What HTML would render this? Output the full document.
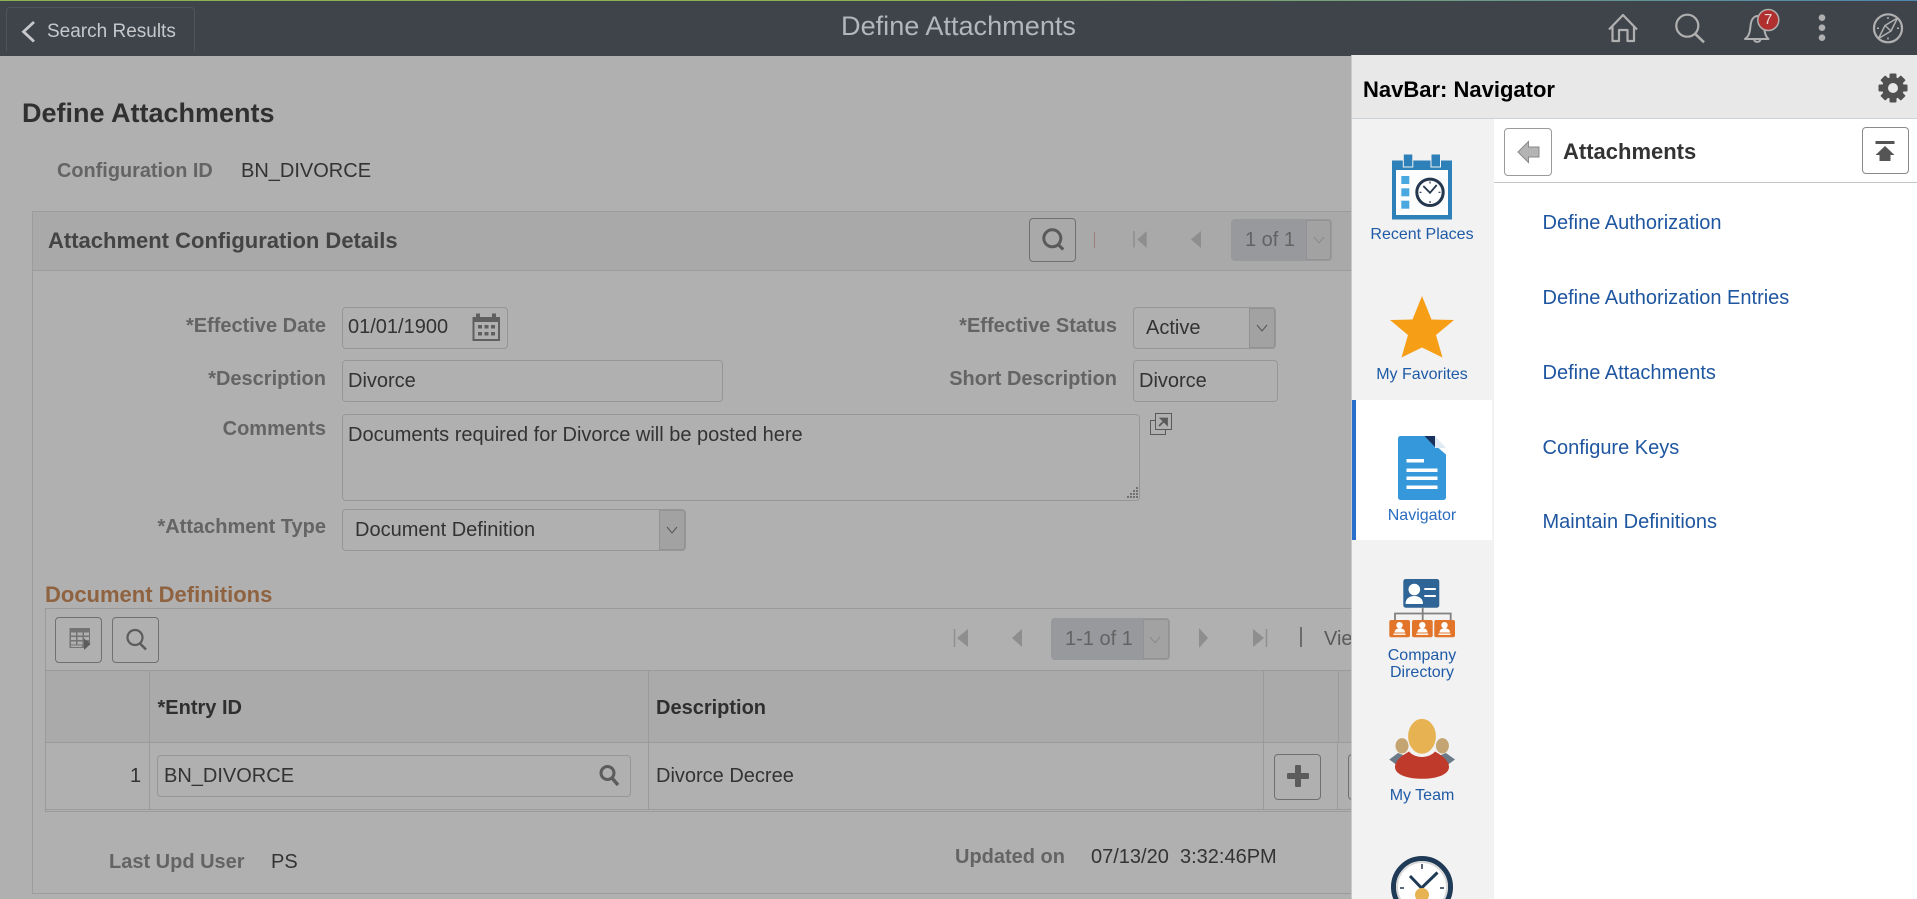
<!DOCTYPE html>
<html lang="en"><head><meta charset="utf-8"><title>Define Attachments</title>
<style>
html,body{margin:0;padding:0;width:1917px;height:899px;overflow:hidden;background:#b0b0b0;font-family:"Liberation Sans",Arial,sans-serif}
#root{position:relative;width:1917px;height:899px;overflow:hidden}
.a{position:absolute;box-sizing:border-box}
.t{position:absolute;line-height:24px;height:24px;white-space:nowrap;font-size:20px;color:#333}
.b{font-weight:bold}
.l{font-weight:bold;color:#646464;text-align:right}
.in{position:absolute;box-sizing:border-box;border:1px solid #969699;border-radius:4px}
.btn{position:absolute;box-sizing:border-box;border:1px solid #707070;border-radius:4px}
.dd{position:absolute;box-sizing:border-box;background:#97999c;border-radius:4px}
.ln{position:absolute;background:#9a9a9d}
.nl{position:absolute;left:1352px;width:140px;text-align:center;font-size:16px;line-height:18px;color:#1f5aa6}
.lk{position:absolute;left:1542.5px;font-size:20px;line-height:24px;color:#1f56a0;white-space:nowrap}
svg{position:absolute;left:0;top:0}
</style></head><body><div id="root">

<!-- header -->
<div class="a" style="left:0;top:0;width:1917px;height:56px;background:#3f444b"></div>
<div class="a" style="left:0;top:0;width:1917px;height:1px;background:linear-gradient(90deg,#8db255 0%,#8db255 50%,#4f86b0 100%)"></div>
<div class="a" style="left:6px;top:7px;width:189px;height:44px;border:1px solid #50555c;border-bottom:0;border-radius:4px 4px 0 0"></div>
<div class="t" style="left:47px;top:20px;font-size:19px;color:#c6c8cb">Search Results</div>
<div class="t" style="left:640px;width:637px;top:14px;text-align:center;font-size:27.1px;line-height:24px;color:#b3b6ba">Define Attachments</div>

<!-- page -->
<div class="t b" style="left:22px;top:101px;font-size:27px;color:#303030">Define Attachments</div>
<div class="t l" style="left:57px;top:159px;font-size:19.9px">Configuration ID</div>
<div class="t" style="left:241px;top:159px;font-size:20px">BN_DIVORCE</div>

<div class="a" style="left:32px;top:211px;width:1330px;height:683px;border:1px solid #9c9c9c"></div>
<div class="a" style="left:33px;top:212px;width:1320px;height:59px;background:#a9a9a9;border-bottom:1px solid #9c9c9c"></div>
<div class="t b" style="left:48px;top:229px;font-size:22px;color:#444">Attachment Configuration Details</div>

<div class="btn" style="left:1029px;top:218px;width:47px;height:44px"></div>
<div class="a" style="left:1093.5px;top:231.500px;width:1.500px;height:16px;background:#9c7f7a"></div>
<div class="dd" style="left:1231px;top:219px;width:101px;height:42px"></div>
<div class="a" style="left:1306px;top:220px;width:25px;height:40px;background:#a2a2a2;border:1px solid #929292;border-radius:0 3px 3px 0"></div>
<div class="t" style="left:1245px;top:228px;color:#636363">1 of 1</div>

<!-- form -->
<div class="t l" style="left:100px;width:226px;top:314px">*Effective Date</div>
<div class="t l" style="left:100px;width:226px;top:367px">*Description</div>
<div class="t l" style="left:100px;width:226px;top:417px">Comments</div>
<div class="t l" style="left:100px;width:226px;top:515px">*Attachment Type</div>

<div class="in" style="left:342px;top:307px;width:166px;height:42px"></div>
<div class="t" style="left:348px;top:315px">01/01/1900</div>
<div class="in" style="left:342px;top:360px;width:381px;height:42px"></div>
<div class="t" style="left:348px;top:369px">Divorce</div>
<div class="in" style="left:342px;top:414px;width:798px;height:87px"></div>
<div class="t" style="left:348px;top:423px">Documents required for Divorce will be posted here</div>
<div class="in" style="left:342px;top:509px;width:344px;height:42px"></div>
<div class="a" style="left:659px;top:510px;width:26px;height:40px;background:#a2a2a2;border:1px solid #929292;border-radius:0 3px 3px 0"></div>
<div class="t" style="left:355px;top:518px">Document Definition</div>

<div class="t l" style="left:900px;width:217px;top:314px">*Effective Status</div>
<div class="t l" style="left:900px;width:217px;top:367px">Short Description</div>
<div class="in" style="left:1133px;top:307px;width:143px;height:42px"></div>
<div class="a" style="left:1249px;top:308px;width:26px;height:40px;background:#a2a2a2;border:1px solid #929292;border-radius:0 3px 3px 0"></div>
<div class="t" style="left:1146px;top:316px">Active</div>
<div class="in" style="left:1133px;top:360px;width:145px;height:42px"></div>
<div class="t" style="left:1139px;top:369px">Divorce</div>

<!-- grid -->
<div class="t b" style="left:45px;top:583px;font-size:22px;color:#8f6240">Document Definitions</div>
<div class="ln" style="left:45px;top:608px;width:1320px;height:1px"></div>
<div class="ln" style="left:45px;top:608px;width:1px;height:204px"></div>
<div class="btn" style="left:55px;top:617px;width:47px;height:46px"></div>
<div class="btn" style="left:112px;top:617px;width:47px;height:46px"></div>
<div class="ln" style="left:45px;top:670px;width:1320px;height:1px"></div>
<div class="ln" style="left:45px;top:742px;width:1320px;height:1px"></div>
<div class="ln" style="left:45px;top:809px;width:1320px;height:1px"></div>
<div class="ln" style="left:45px;top:811px;width:1320px;height:1px"></div>
<div class="a" style="left:46px;top:671px;width:1305px;height:71px;background:#aaaaaa"></div>
<div class="ln" style="left:149px;top:670px;width:1px;height:139px"></div>
<div class="ln" style="left:648px;top:670px;width:1px;height:139px"></div>
<div class="ln" style="left:1263px;top:670px;width:1px;height:139px"></div>
<div class="ln" style="left:1338px;top:670px;width:1px;height:72px"></div>
<div class="ln" style="left:1337px;top:742px;width:1px;height:67px"></div>

<div class="dd" style="left:1051px;top:618px;width:119px;height:42px"></div>
<div class="a" style="left:1143px;top:619px;width:26px;height:40px;background:#a2a2a2;border:1px solid #929292;border-radius:0 3px 3px 0"></div>
<div class="t" style="left:1065px;top:627px;color:#636363">1-1 of 1</div>
<div class="a" style="left:1300px;top:627px;width:2px;height:20px;background:#6c6c6c"></div>
<div class="t" style="left:1324px;top:627px;color:#5a5a5a">View All</div>

<div class="t b" style="left:157.5px;top:696px;color:#2f2f2f">*Entry ID</div>
<div class="t b" style="left:656px;top:696px;color:#2f2f2f">Description</div>
<div class="t" style="left:130px;width:11px;top:764px;text-align:right">1</div>
<div class="in" style="left:157px;top:755px;width:474px;height:42px"></div>
<div class="t" style="left:164px;top:764px">BN_DIVORCE</div>
<div class="t" style="left:656px;top:764px">Divorce Decree</div>
<div class="btn" style="left:1274px;top:754px;width:47px;height:46px"></div>
<div class="btn" style="left:1348px;top:754px;width:47px;height:46px"></div>
<div class="a" style="left:1287px;top:773px;width:22px;height:6px;background:#5c5c5c;border-radius:1px"></div>
<div class="a" style="left:1295px;top:765px;width:6px;height:22px;background:#5c5c5c;border-radius:1px"></div>

<div class="t l" style="left:109px;top:850px">Last Upd User</div>
<div class="t" style="left:271px;top:850px">PS</div>
<div class="t l" style="left:955px;top:845px">Updated on</div>
<div class="t" style="left:1091px;top:845px;white-space:pre">07/13/20  3:32:46PM</div>

<!-- icons beneath panel -->
<svg width="1917" height="899" viewBox="0 0 1917 899" fill="none">
 <!-- header -->
 <path d="M34 22L23.500 31.700L34 41.500" stroke="#c6c8cb" stroke-width="2.800"/>
 <path d="M1609 29.500L1623 15L1637 29.500M1612.500 26V41H1619V30H1627.500V41H1634V26" stroke="#b0b0b0" stroke-width="2.200" stroke-linejoin="round"/>
 <circle cx="1687.300" cy="25.700" r="11" stroke="#b0b0b0" stroke-width="2.200"/>
 <path d="M1695 33.700L1704 42.300" stroke="#b0b0b0" stroke-width="2.600"/>
 <path d="M1745 39C1749.500 36 1750 31 1750.500 26C1751 20 1753.500 16.500 1757 16C1761 16.500 1763.500 20 1764 26C1764.500 31 1765 36 1768.500 39Z" stroke="#b0b0b0" stroke-width="2" stroke-linejoin="round"/>
 <path d="M1754 39.500a3.400 3.400 0 0 0 6.500 0" stroke="#b0b0b0" stroke-width="2"/>
 <circle cx="1768.300" cy="20" r="10.500" fill="#b03030" stroke="#b0b0b0" stroke-width="1.500"/>
 <circle cx="1822" cy="17.700" r="3.300" fill="#b0b0b0"/><circle cx="1822" cy="27.700" r="3.300" fill="#b0b0b0"/><circle cx="1822" cy="37.700" r="3.300" fill="#b0b0b0"/>
 <circle cx="1888" cy="28.300" r="14" stroke="#b0b0b0" stroke-width="2.200"/>
 <path d="M1897.500 18L1891 31L1878.500 38.500L1885 25.500Z" stroke="#b0b0b0" stroke-width="1.500" stroke-linejoin="round"/>
 <path d="M1885 25.500L1891 31" stroke="#b0b0b0" stroke-width="1.500"/>
 <path d="M1888 17v2M1888 37.500v2M1877 28.300h2M1897 28.300h2" stroke="#b0b0b0" stroke-width="1.500"/>
 <!-- section toolbar -->
 <circle cx="1052.300" cy="238.300" r="8.500" stroke="#5a5a5a" stroke-width="3"/>
 <path d="M1058 244.500L1063.300 249.500" stroke="#5a5a5a" stroke-width="3"/>
 <path d="M1134 231V247.500" stroke="#8e8e8e" stroke-width="1.500"/><path d="M1146.700 231V248L1137.300 239.500Z" fill="#8e8e8e"/>
 <path d="M1201 231V248L1191 239.500Z" fill="#8e8e8e"/>
 <path d="M1314 237L1319 243L1324 237" stroke="#8a8a8a" stroke-width="1"/>
 <!-- calendar -->
 <path d="M472.500 317H476V313.500H480V317H492V313.500H496V317H500V341H472.500Z" fill="#5f5f5f"/>
 <rect x="474.500" y="322" width="23.500" height="17" fill="#b0b0b0"/>
 <path d="M478 325h4v3.500h-4zM484.500 325h4v3.500h-4zM491 325h4v3.500h-4zM478 332h4v3.500h-4zM484.500 332h4v3.500h-4zM491 332h4v3.500h-4z" fill="#5f5f5f"/>
 <!-- select arrows -->
 <path d="M667 527L672 533L677 527" stroke="#555" stroke-width="1"/>
 <path d="M1257 325L1262 331L1267 325" stroke="#555" stroke-width="1"/>
 <!-- popup -->
 <rect x="1150.500" y="420.500" width="15" height="14" stroke="#5a5a5a" fill="none"/>
 <rect x="1155.500" y="413.500" width="16" height="16" stroke="#5a5a5a" fill="#b0b0b0"/>
 <path d="M1159 426L1165 420M1161 418.500H1167V424.500Z" stroke="#5a5a5a" stroke-width="1.800" fill="#5a5a5a"/>
 <!-- grip -->
 <path d="M1136 487h2v2h-2zM1133 490h2v2h-2zM1136 490h2v2h-2zM1130 493h2v2h-2zM1133 493h2v2h-2zM1136 493h2v2h-2zM1127 496h2v2h-2zM1130 496h2v2h-2zM1133 496h2v2h-2zM1136 496h2v2h-2z" fill="#707070"/>
 <!-- grid toolbar -->
 <path d="M69.500 628H90V645H84V648H69.500Z" fill="#747474"/>
 <path d="M71 632.500h5v3h-5zM77.500 632.500h5v3h-5zM84 632.500h5v3h-5zM71 637h5v3h-5zM77.500 637h5v3h-5zM84 637h5v3h-5zM71 641.500h5v3h-5zM77.500 641.500h5v3h-5zM71 645.500h11v1.500h-11z" fill="#b0b0b0"/>
 <path d="M84 638.500L90.500 644L84 650Z" fill="#5c5c5c"/>
 <circle cx="135" cy="637.500" r="7.500" stroke="#5c5c5c" stroke-width="2.200"/>
 <path d="M140 643.500L146 649.500" stroke="#5c5c5c" stroke-width="2.600"/>
 <path d="M954.500 629V647" stroke="#8e8e8e" stroke-width="1.500"/><path d="M968 629V647L957 638Z" fill="#8e8e8e"/>
 <path d="M1022 629V647L1012 638Z" fill="#8e8e8e"/>
 <path d="M1199 628V648L1208 638Z" fill="#8e8e8e"/>
 <path d="M1253 629V647L1264 638Z" fill="#8e8e8e"/><path d="M1266.500 629V647" stroke="#8e8e8e" stroke-width="1.500"/>
 <path d="M1150 637L1155 643L1160 637" stroke="#8a8a8a" stroke-width="1"/>
 <!-- entry search -->
 <circle cx="607.500" cy="773" r="6.500" stroke="#5c5c5c" stroke-width="3"/>
 <path d="M612 778L618 785" stroke="#5c5c5c" stroke-width="3.400"/>
</svg>
<div class="t" style="left:1764px;top:8px;font-size:15px;color:#e8d8d8">7</div>

<!-- panel -->
<div class="a" style="left:1351px;top:55px;width:566px;height:844px;background:#fff;border-left:1px solid #c9c9c9"></div>
<div class="a" style="left:1352px;top:55px;width:565px;height:64px;background:#e8e8e8;border-bottom:1px solid #cdd2d6"></div>
<div class="t b" style="left:1363px;top:78px;font-size:22px;color:#000">NavBar: Navigator</div>
<div class="a" style="left:1352px;top:119px;width:142px;height:780px;background:#f2f2f2"></div>
<div class="a" style="left:1352px;top:400px;width:140px;height:140px;background:#fff;border-left:4px solid #2a6fc9"></div>
<div class="a" style="left:1494px;top:182px;width:423px;height:1px;background:#c4c4c4"></div>
<div class="a" style="left:1504px;top:128px;width:48px;height:48px;border:1px solid #9a9a9a;border-radius:4px;background:#fff"></div>
<div class="t b" style="left:1563px;top:140px;font-size:22px;color:#333">Attachments</div>
<div class="a" style="left:1862px;top:127px;width:47px;height:47px;border:1px solid #8a8a8a;border-radius:4px;background:#fff"></div>

<div class="lk" style="top:211px">Define Authorization</div>
<div class="lk" style="top:286px">Define Authorization Entries</div>
<div class="lk" style="top:361px">Define Attachments</div>
<div class="lk" style="top:436px">Configure Keys</div>
<div class="lk" style="top:510px">Maintain Definitions</div>

<div class="nl" style="top:226px">Recent Places</div>
<div class="nl" style="top:366px">My Favorites</div>
<div class="nl" style="top:507px;color:#2a6cc0">Navigator</div>
<div class="nl" style="top:647px;line-height:17px">Company<br>Directory</div>
<div class="nl" style="top:787px">My Team</div>

<svg width="1917" height="899" viewBox="0 0 1917 899" fill="none">
 <!-- gear -->
 <g transform="translate(1893 88)">
  <g fill="#505050"><rect x="-3.500" y="-14.500" width="7" height="29" rx="1"/><rect x="-3.500" y="-14.500" width="7" height="29" rx="1" transform="rotate(45)"/><rect x="-3.500" y="-14.500" width="7" height="29" rx="1" transform="rotate(90)"/><rect x="-3.500" y="-14.500" width="7" height="29" rx="1" transform="rotate(135)"/></g>
  <circle r="11" fill="#505050"/><circle r="5" fill="#e8e8e8"/>
 </g>
 <!-- back arrow -->
 <path d="M1518 152L1528.500 141.500V147H1539V157H1528.500V162.500Z" fill="#b4b4b4" stroke="#8a8a8a" stroke-width="1"/>
 <!-- top -->
 <rect x="1875.500" y="141" width="19" height="3" fill="#555"/>
 <path d="M1885 146L1894.500 155H1890.500V161H1879.500V155H1875.500Z" fill="#555"/>
 <!-- recent places -->
 <rect x="1392" y="160.500" width="60" height="59" fill="#2e80b9"/>
 <rect x="1396" y="170" width="52" height="45" fill="#fdfdfd"/>
 <rect x="1403.300" y="154" width="9.500" height="13" fill="#2e80b9" stroke="#f2f2f2" stroke-width="1"/>
 <rect x="1431" y="154" width="9.500" height="13" fill="#2e80b9" stroke="#f2f2f2" stroke-width="1"/>
 <rect x="1401.300" y="176" width="8" height="8" fill="#4aa8e0"/><rect x="1401.300" y="188.300" width="8" height="8" fill="#4aa8e0"/><rect x="1401.300" y="200.700" width="8" height="8" fill="#4aa8e0"/>
 <circle cx="1430" cy="192.300" r="13.200" stroke="#24374d" stroke-width="3" fill="#fff"/>
 <path d="M1423.300 186L1430 192.800L1436.700 185" stroke="#24374d" stroke-width="1.800"/>
 <path d="M1430 181.500v2M1430 201v2M1419.500 192.300h2M1438.500 192.300h2" stroke="#24374d" stroke-width="1.200"/>
 <!-- star -->
 <path d="M1422 296L1431.500 319.500L1454 320L1436 335L1442.500 357.500L1422 347.500L1401.500 357.500L1408 335L1390 320L1412.500 319.500Z" fill="#f59e16"/>
 <!-- doc -->
 <path d="M1400 436H1424.500L1446 454.500V497.500a2.500 2.500 0 0 1-2.500 2.500H1400.500a2.500 2.500 0 0 1-2.500-2.500V438.500a2.500 2.500 0 0 1 2.500-2.500Z" fill="#3498db"/>
 <path d="M1424.500 436H1435V447Z" fill="#18305c"/>
 <path d="M1435 436L1446 448H1435Z" fill="#dfeaf4"/>
 <rect x="1406.500" y="459" width="17.500" height="3.500" fill="#fff"/><rect x="1406.500" y="468.500" width="31" height="3.500" fill="#fff"/><rect x="1406.500" y="476.500" width="31" height="3.500" fill="#fff"/><rect x="1406.500" y="485.500" width="31" height="3.500" fill="#fff"/>
 <!-- company directory -->
 <rect x="1403.300" y="579" width="36" height="28.700" rx="2.500" fill="#2f6496"/>
 <circle cx="1414.300" cy="589.500" r="5.800" fill="#fff"/>
 <path d="M1405.500 604C1405.500 598.500 1409.500 596 1414.300 596C1419 596 1423 598.500 1423 604Z" fill="#fff"/>
 <rect x="1424.300" y="588" width="11.500" height="2" fill="#fff"/><rect x="1424.300" y="595" width="11.500" height="2" fill="#fff"/>
 <path d="M1422.700 607.700V620M1395 620V613.500H1450.700V620" stroke="#808080" stroke-width="1.800"/>
 <rect x="1389.300" y="620" width="20.700" height="17.300" rx="2" fill="#e2752a"/><circle cx="1399.500" cy="625.200" r="3.200" fill="#fff"/><path d="M1394.500 632.500C1394.500 629.500 1397 628.300 1399.500 628.300C1402.300 628.300 1405 629.500 1405 632.500Z" fill="#fff"/><rect x="1393.500" y="633.500" width="12" height="1.400" fill="#fff"/>
 <rect x="1412" y="620" width="20.700" height="17.300" rx="2" fill="#e2752a"/><circle cx="1422.300" cy="625.200" r="3.200" fill="#fff"/><path d="M1417.300 632.500C1417.300 629.500 1419.800 628.300 1422.300 628.300C1425 628.300 1427.500 629.500 1427.500 632.500Z" fill="#fff"/><rect x="1416.300" y="633.500" width="12" height="1.400" fill="#fff"/>
 <rect x="1434.300" y="620" width="20.700" height="17.300" rx="2" fill="#e2752a"/><circle cx="1444.500" cy="625.200" r="3.200" fill="#fff"/><path d="M1439.500 632.500C1439.500 629.500 1442 628.300 1444.500 628.300C1447.300 628.300 1450 629.500 1450 632.500Z" fill="#fff"/><rect x="1438.500" y="633.500" width="12" height="1.400" fill="#fff"/>
 <!-- my team -->
 <path d="M1389.300 759.500L1398 753L1408 757V766H1398Z" fill="#6b7a88"/>
 <path d="M1455 759.500L1446 753L1436 757V766H1446Z" fill="#6b7a88"/>
 <ellipse cx="1402" cy="745.800" rx="6.500" ry="7.700" fill="#c4a470"/>
 <ellipse cx="1442.400" cy="745.800" rx="6.500" ry="7.700" fill="#c4a470"/>
 <path d="M1395 767C1395 760 1403 755 1409 751.500C1412 755 1417 757 1422 757C1427 757 1432 755 1435 751.500C1441 755 1449 760 1449 767C1449 774.500 1437 778.800 1422 778.800C1407 778.800 1395 774.500 1395 767Z" fill="#c03a2b"/>
 <ellipse cx="1422" cy="736.300" rx="14.500" ry="18" fill="#e6b252" stroke="#f2f2f2" stroke-width="1.200"/>
 <!-- clock -->
 <circle cx="1422" cy="887" r="28.500" fill="#fff" stroke="#1f3a57" stroke-width="5"/>
 <circle cx="1422" cy="887" r="25" stroke="#d8d8d8" stroke-width="2"/>
 <path d="M1422 864v5M1400 888h4M1440 888h4" stroke="#24374d" stroke-width="1.500"/>
 <path d="M1410 876L1421.500 888L1437.500 872.500" stroke="#1f3a57" stroke-width="3"/>
 <circle cx="1422" cy="895" r="7" fill="#e6b252"/>
</svg>
</div></body></html>
